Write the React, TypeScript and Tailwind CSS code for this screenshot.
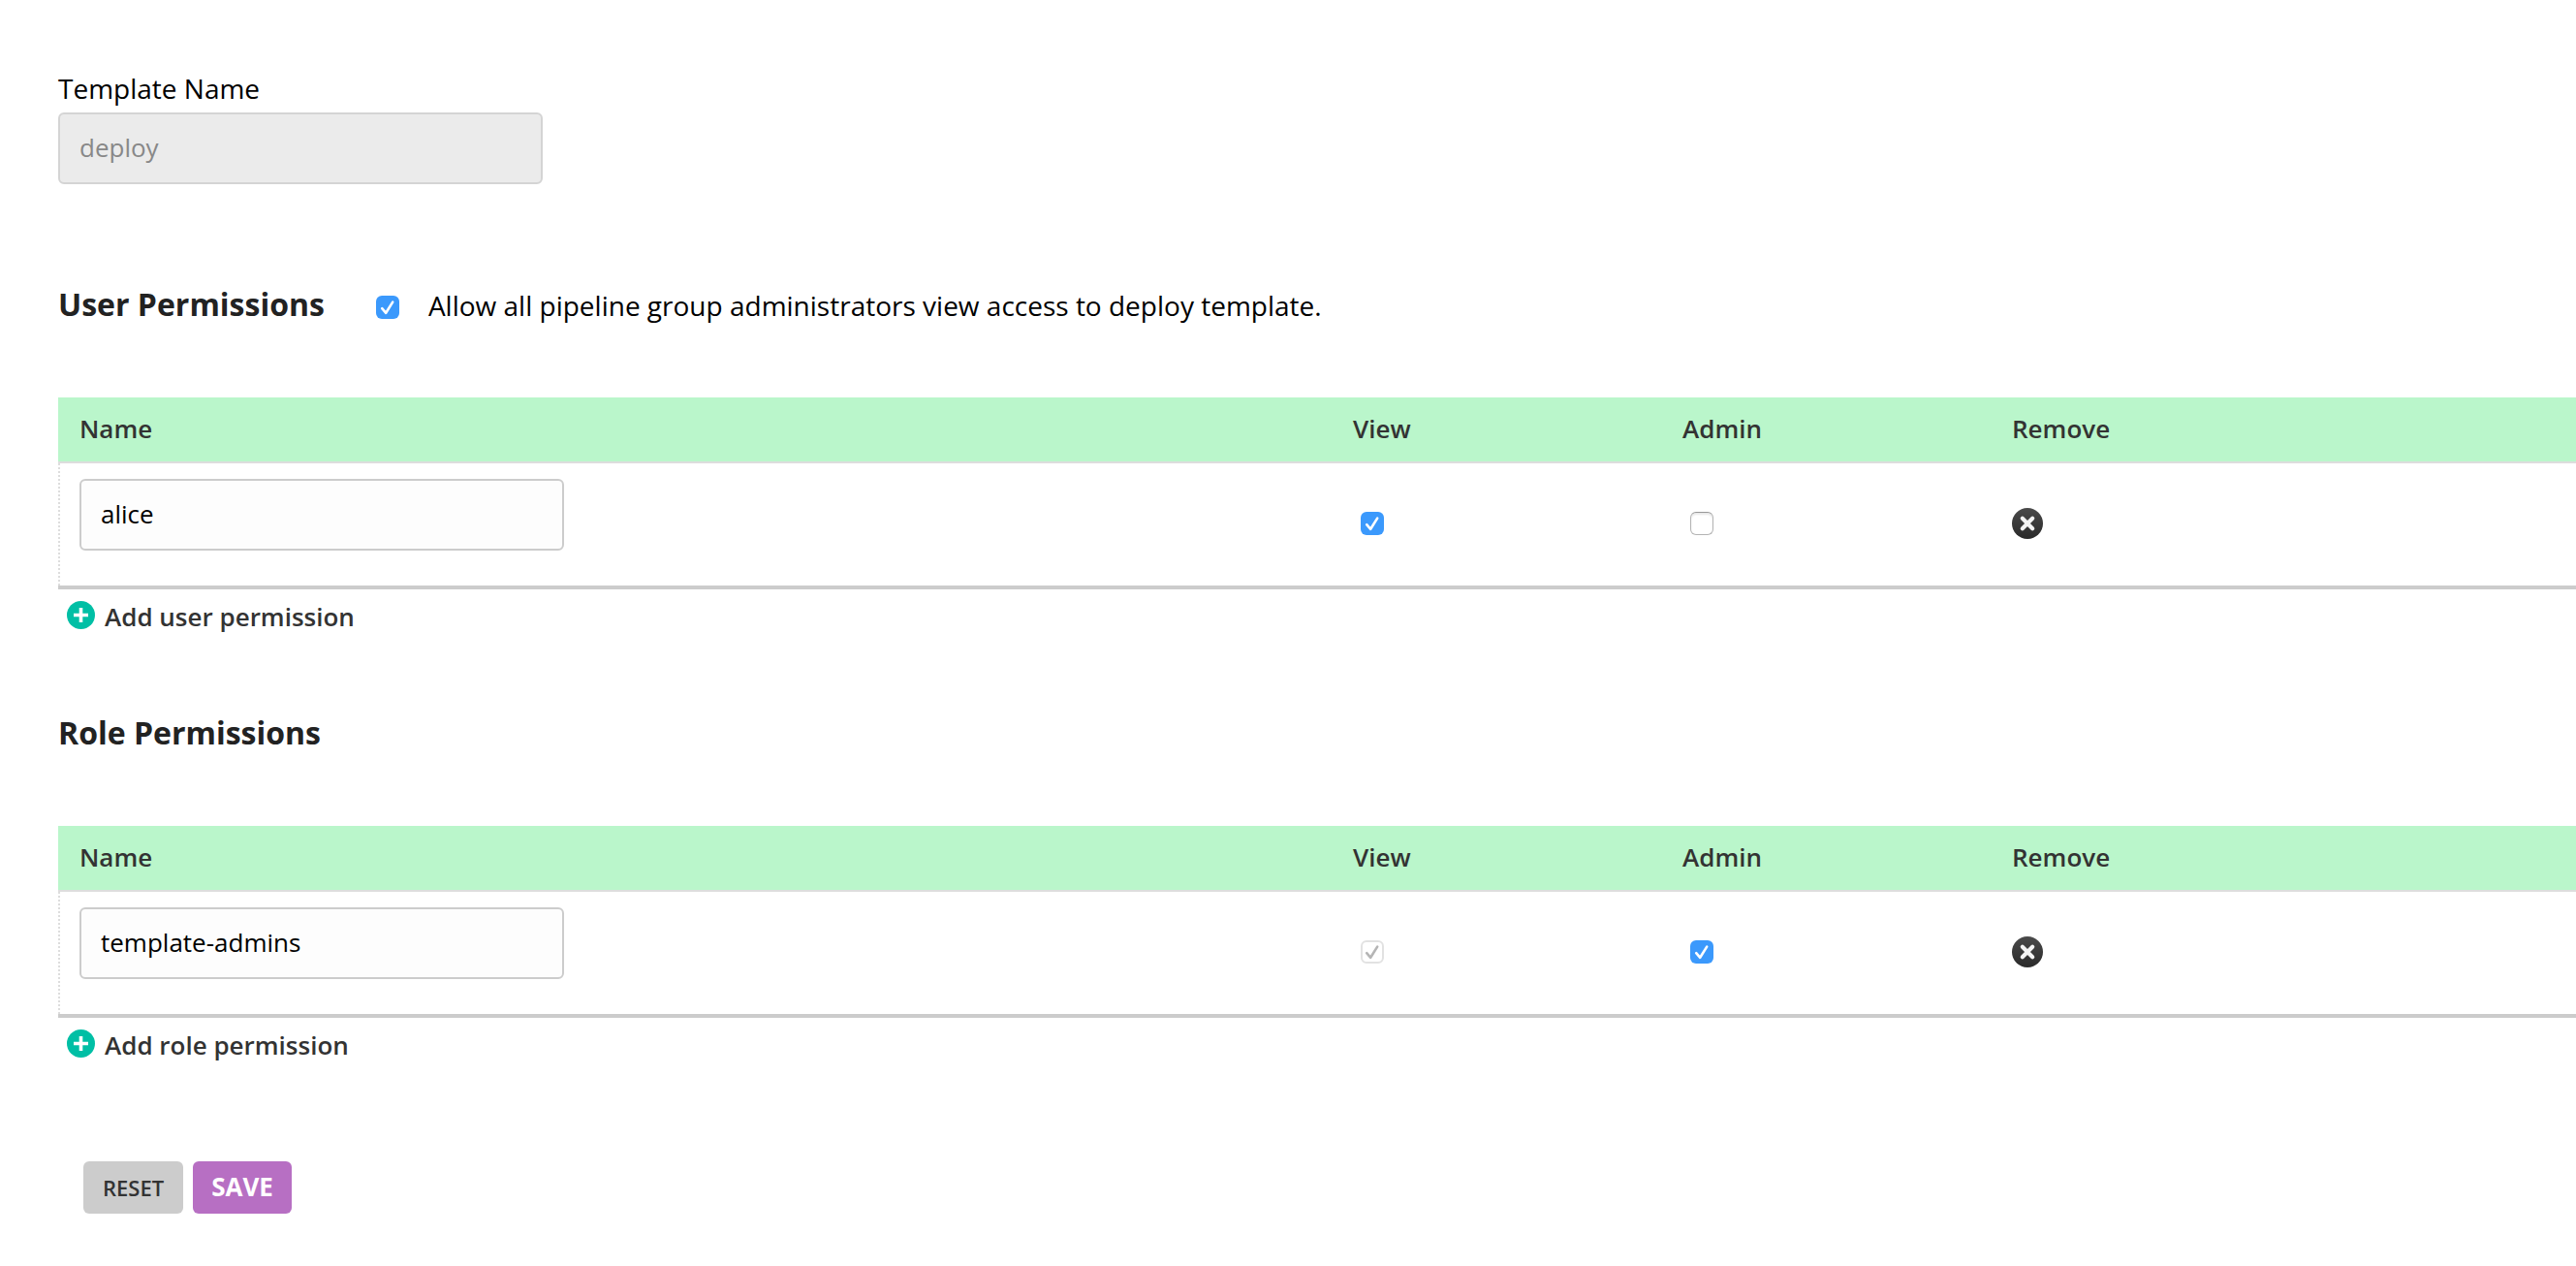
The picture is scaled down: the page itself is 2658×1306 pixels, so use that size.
import { useState } from "react";

type TickProps = {
  id?: string;
  label?: string;
  defaultChecked?: boolean;
  disabled?: boolean;
};

function Tick({ id, label, defaultChecked = false, disabled = false }: TickProps) {
  const [checked, setChecked] = useState(defaultChecked);
  const look = disabled
    ? "border-2 border-[#e2e2e2] bg-white"
    : checked
      ? "bg-[#3b99fc]"
      : "border border-[#b4b4b4] border-t-[#999999] bg-white shadow-[inset_0_2px_2px_#e8e8e8]";
  return (
    <span className="relative block size-6 shrink-0">
      <input
        id={id}
        type="checkbox"
        aria-label={label}
        checked={checked}
        disabled={disabled}
        onChange={(e) => setChecked(e.target.checked)}
        className={`block size-6 appearance-none rounded-md ${look}`}
      />
      {checked && (
        <svg
          viewBox="0 0 24 24"
          aria-hidden="true"
          className={`pointer-events-none absolute inset-0 size-6 ${disabled ? "text-[#b5b5b5]" : "text-white"}`}
        >
          <path
            d="M6.2 13.2 10.2 17.8 17.2 6.6"
            fill="none"
            stroke="currentColor"
            strokeWidth="2.6"
            strokeLinecap="round"
            strokeLinejoin="round"
          />
        </svg>
      )}
    </span>
  );
}

function RemoveIcon() {
  return (
    <svg viewBox="0 0 32 32" className="block size-8" aria-hidden="true">
      <defs>
        <linearGradient id="remove-fill" x1="0" y1="0" x2="0" y2="1">
          <stop offset="0" stopColor="#4a4a4a" />
          <stop offset="1" stopColor="#2a2a2a" />
        </linearGradient>
      </defs>
      <circle cx="16" cy="16" r="16" fill="url(#remove-fill)" />
      <path
        d="M10.8 10.8 21.2 21.2M21.2 10.8 10.8 21.2"
        stroke="#f4f4f4"
        strokeWidth="4.2"
        strokeLinecap="round"
      />
    </svg>
  );
}

function AddIcon() {
  return (
    <svg viewBox="0 0 29 29" className="mb-1 block size-[29px]" aria-hidden="true">
      <circle cx="14.5" cy="14.5" r="14.5" fill="#00bfa5" />
      <path d="M14.5 7V22M7 14.5H22" stroke="#ffffff" strokeWidth="3.6" />
    </svg>
  );
}

type PermissionsProps = {
  kind: string;
  name: string;
  view: boolean;
  viewDisabled?: boolean;
  admin: boolean;
};

function Permissions({ kind, name, view, viewDisabled, admin }: PermissionsProps) {
  const th = "h-[68px] border-b-2 border-[#dddddd] px-[22px] pt-0 pb-0.5 text-left font-semibold";
  const td = "border-b-4 border-[#cccccc]";
  return (
    <>
      <table className="w-full table-fixed border-separate border-spacing-0 text-[26px] leading-9">
        <thead>
          <tr className="bg-[#baf6cb] text-[#333333]">
            <th className={th}>Name</th>
            <th className={`${th} w-[340px]`}>View</th>
            <th className={`${th} w-[340px]`}>Admin</th>
            <th className={`${th} w-[604px]`}>Remove</th>
          </tr>
        </thead>
        <tbody>
          <tr>
            <td className={`${td} p-0`}>
              <div className="border-l-2 border-dotted border-[#dddddd] pt-4 pr-5 pb-9 pl-5">
                <input
                  type="text"
                  aria-label={`${kind} name`}
                  defaultValue={name}
                  className="block h-[74px] w-[500px] max-w-full rounded-md border-2 border-[#cccccc] bg-[#fdfdfd] px-5 pb-0.5 text-black"
                />
              </div>
            </td>
            <td className={`${td} px-[30px] pt-0 pb-0.5`}>
              <Tick label={`View ${name}`} defaultChecked={view} disabled={viewDisabled} />
            </td>
            <td className={`${td} px-[30px] pt-0 pb-0.5`}>
              <Tick label={`Admin ${name}`} defaultChecked={admin} />
            </td>
            <td className={`${td} px-[22px] pt-0 pb-0.5`}>
              <button type="button" aria-label={`Remove ${name}`} className="block">
                <RemoveIcon />
              </button>
            </td>
          </tr>
        </tbody>
      </table>
      <a
        href={`#add-${kind}`}
        className="mt-[10px] ml-[9px] flex w-fit items-center gap-[10px] text-[26px] leading-9 font-semibold text-[#333333]"
      >
        <AddIcon />
        Add {kind} permission
      </a>
    </>
  );
}

export default function App() {
  const heading = "text-[32px] leading-11 font-bold text-[#222222]";
  return (
    <form
      className="pt-[71px] pl-[60px] font-['Open_Sans',sans-serif] text-[28px] leading-10 text-black"
      onSubmit={(e) => e.preventDefault()}
    >
      <label htmlFor="template-name" className="block">
        Template Name
      </label>
      <input
        id="template-name"
        type="text"
        disabled
        defaultValue="deploy"
        className="mt-[5px] block h-[74px] w-[500px] rounded-md border-2 border-[#d4d4d4] bg-[#ebebeb] px-5 pb-0.5 text-[26px] text-[#888888]"
      />

      <section className="mt-[102px]">
        <div className="mb-[74px] flex items-baseline">
          <h2 className={`${heading} mr-[53px]`}>User Permissions</h2>
          <div className="mt-1.5 self-center">
            <Tick id="allow-all" defaultChecked />
          </div>
          <label htmlFor="allow-all" className="ml-[30px]">
            Allow all pipeline group administrators view access to deploy template.
          </label>
        </div>
        <Permissions kind="user" name="alice" view admin={false} />
      </section>

      <section className="mt-20">
        <h2 className={`${heading} mb-[74px]`}>Role Permissions</h2>
        <Permissions kind="role" name="template-admins" view viewDisabled admin />
      </section>

      <div className="mt-[102px] ml-[26px] flex gap-[10px]">
        <button
          type="reset"
          className="h-[54px] rounded-md bg-[#cccccc] px-5 text-[22px] leading-8 font-semibold text-[#333333]"
        >
          RESET
        </button>
        <button
          type="submit"
          className="h-[54px] rounded-md bg-[#b76fc3] px-[19px] pb-0.5 text-[26px] leading-8 font-bold text-white"
        >
          SAVE
        </button>
      </div>
    </form>
  );
}
